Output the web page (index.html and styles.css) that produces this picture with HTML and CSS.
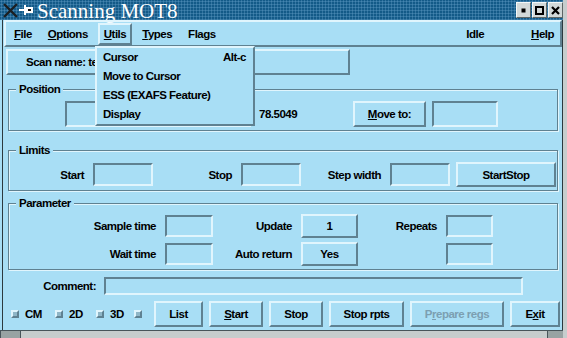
FILE: index.html
```html
<!DOCTYPE html>
<html>
<head>
<meta charset="utf-8">
<title>Scanning MOT8</title>
<link rel="stylesheet" href="styles.css">
</head>
<body>
<div class="win">
    <div class="titlebar">
        <svg class="wm-icon" width="34" height="20" viewBox="0 0 34 20">
            <path d="M4 4 L17 17 M17 4 L4 17" stroke="#1b1f22" stroke-width="2.4" fill="none"/>
            <rect x="19" y="9" width="6" height="2" fill="#fff"/>
            <rect x="24" y="5" width="2" height="10" fill="#fff"/>
            <rect x="26" y="7" width="7" height="6" fill="#fff"/>
            <rect x="28" y="9" width="3" height="2" fill="#111"/>
        </svg>
        <span class="title">Scanning MOT8</span>
        <div class="wm-buttons">
            <div class="wm-btn">
                <svg width="9" height="9" viewBox="0 0 9 9"><rect x="2.5" y="2.5" width="4" height="4" fill="#000"/></svg>
            </div>
            <div class="wm-btn">
                <svg width="9" height="9" viewBox="0 0 9 9"><rect x="1" y="1" width="7" height="7" fill="none" stroke="#000" stroke-width="2"/></svg>
            </div>
            <div class="wm-btn">
                <svg width="9" height="9" viewBox="0 0 9 9"><path d="M1 1 L8 8 M8 1 L1 8" stroke="#000" stroke-width="2.2"/></svg>
            </div>
        </div>
    </div>

    <div class="main">
        <div class="menubar">
            <span class="mb"><u>F</u>ile</span>
            <span class="mb"><u>O</u>ptions</span>
            <span class="mb active"><u>U</u>tils</span>
            <span class="mb"><u>T</u>ypes</span>
            <span class="mb">Flags</span>
            <span class="mb status">Idle</span>
            <span class="mb help"><u>H</u>elp</span>
        </div>

        <div class="scanname"><span class="scan-text">Scan name: test</span></div>

        <fieldset class="group">
            <legend>Position</legend>
            <div class="row pos-row">
                <span class="entry pos-cur"></span>
                <span class="value">78.5049</span>
                <span class="btn move-btn"><u>M</u>ove to:</span>
                <span class="entry move-entry"></span>
            </div>
        </fieldset>

        <fieldset class="group limits">
            <legend>Limits</legend>
            <div class="row lim-row">
                <span class="lbl l-start">Start</span>
                <span class="entry lim-entry"></span>
                <span class="lbl l-stop">Stop</span>
                <span class="entry lim-entry"></span>
                <span class="lbl l-step">Step width</span>
                <span class="entry lim-entry"></span>
                <span class="btn startstop">StartStop</span>
            </div>
        </fieldset>

        <fieldset class="group params">
            <legend>Parameter</legend>
            <div class="param-grid">
                <span class="lbl">Sample time</span>
                <span class="entry"></span>
                <span class="lbl">Update</span>
                <span class="btn">1</span>
                <span class="lbl">Repeats</span>
                <span class="entry"></span>

                <span class="lbl">Wait time</span>
                <span class="entry"></span>
                <span class="lbl">Auto return</span>
                <span class="btn">Yes</span>
                <span class="lbl"></span>
                <span class="entry"></span>
            </div>
        </fieldset>

        <div class="comment-row">
            <span class="lbl">Comment:</span>
            <span class="entry comment-entry"></span>
        </div>

        <div class="button-row">
            <span class="check c1"><i class="box"></i>CM</span>
            <span class="check c2"><i class="box"></i>2D</span>
            <span class="check c3"><i class="box"></i>3D</span>
            <span class="check c4"><i class="box"></i></span>
            <span class="btn b-list">List</span>
            <span class="btn b-start"><u>S</u>tart</span>
            <span class="btn b-stop">Stop</span>
            <span class="btn b-rpts">Stop rpts</span>
            <span class="btn b-prep disabled">P<u>r</u>epare regs</span>
            <span class="btn b-exit">E<u>x</u>it</span>
        </div>
    </div>

    <div class="bottom-frame">
        <span class="corner"></span>
        <span class="corner"></span>
    </div>

    <div class="dropdown">
        <div class="item"><span>Cursor</span><span>Alt-c</span></div>
        <div class="item">Move to Cursor</div>
        <div class="item">ESS (EXAFS Feature)</div>
        <div class="item">Display</div>
    </div>
</div>
</body>
</html>
```

FILE: styles.css
```css
* {
    box-sizing: border-box;
}
body {
    margin: 0;
    width: 567px;
    height: 338px;
    overflow: hidden;
    background: #a8def5;
    font-family: "Liberation Sans", Arial, sans-serif;
    font-weight: bold;
    font-size: 11.5px;
    letter-spacing: -0.5px;
    color: #000;
}
u {
    text-decoration-thickness: 1px;
}

/* window frame */
.win {
    position: relative;
    width: 567px;
    height: 338px;
    border-right: 4px solid #c6cdcd;
    display: flex;
    flex-direction: column;
    background: #a8def5;
}
.titlebar {
    height: 20px;
    flex: none;
    display: flex;
    align-items: center;
    background-color: #135a88;
    background-image: radial-gradient(circle, #4585b0 0.8px, transparent 1.3px);
    background-size: 3px 3px;
}
.wm-icon {
    flex: none;
    display: block;
}
.title {
    font-family: "Liberation Serif", "Times New Roman", serif;
    font-weight: normal;
    font-size: 21px;
    letter-spacing: 0;
    line-height: 20px;
    padding-top: 1px;
    color: #fff;
    margin-left: 3px;
}
.wm-buttons {
    margin-left: auto;
    display: flex;
    gap: 1px;
}
.wm-btn {
    width: 15px;
    height: 16px;
    background: #d2d9d9;
    border: 1px solid;
    border-color: #f4f8f8 #5d6666 #5d6666 #f4f8f8;
    display: flex;
    align-items: center;
    justify-content: center;
}

.main {
    flex: 1;
    margin-left: 2px;
    border-left: 1px solid #2c393e;
    border-right: 1px solid #2c393e;
    display: flex;
    flex-direction: column;
}

/* menubar */
.menubar {
    height: 27px;
    margin-left: 1px;
    border: 2px solid;
    border-color: #e0f5fd #5f8191 #5f8191 #e0f5fd;
    display: flex;
    align-items: center;
    gap: 4px;
    padding-left: 2px;
}
.mb {
    height: 22px;
    line-height: 18px;
    padding: 0 4px;
    border: 2px solid transparent;
}
.mb.active {
    border-color: #e0f5fd #5f8191 #5f8191 #e0f5fd;
}
.mb.status {
    margin-left: auto;
}
.mb.help {
    margin-left: 31px;
}

.dropdown {
    position: absolute;
    left: 95px;
    top: 46px;
    width: 160px;
    height: 80px;
    padding: 0 7px 0 6px;
    background: #a8def5;
    border: 2px solid;
    border-color: #e0f5fd #5f8191 #5f8191 #e0f5fd;
}
.dropdown .item {
    height: 19px;
    line-height: 19px;
    display: flex;
    justify-content: space-between;
}

/* scan name */
.scanname {
    align-self: flex-start;
    width: 344px;
    height: 26px;
    margin: 2px 0 0 3px;
    padding-left: 18px;
    line-height: 22px;
    border: 2px solid;
    border-color: #e0f5fd #5f8191 #5f8191 #e0f5fd;
}
.scan-text {
    display: block;
    width: 69px;
    white-space: nowrap;
    overflow: hidden;
}

/* groups */
.group {
    margin: 7px 4px 0 5px;
    padding: 5px 0 3px 0;
    border: 1px solid #5f8191;
    box-shadow: inset 1px 1px 0 #e0f5fd, 1px 1px 0 #e0f5fd;
    min-width: 0;
}
.group legend {
    margin-left: 7px;
    padding: 0 3px;
    line-height: 14px;
    background: #a8def5;
}
.group.limits {
    margin-top: 12px;
}
.group.params {
    margin-top: 5px;
    padding-top: 4px;
}

.row {
    display: flex;
    align-items: center;
}

.entry {
    display: block;
    border: 2px solid;
    border-color: #5f8191 #e0f5fd #e0f5fd #5f8191;
    height: 22px;
}
.btn {
    display: flex;
    align-items: center;
    justify-content: center;
    border: 2px solid;
    border-color: #e0f5fd #5f8191 #5f8191 #e0f5fd;
    height: 24px;
    white-space: nowrap;
}
.lbl {
    text-align: right;
    white-space: nowrap;
}

.pos-row {
    height: 26px;
}
.pos-cur {
    margin-left: 56px;
    width: 186px;
    height: 26px;
}
.value {
    margin-left: 8px;
    width: 94px;
}
.move-btn {
    width: 73px;
    height: 26px;
}
.move-entry {
    margin-left: 6px;
    width: 66px;
    height: 26px;
}

.lim-row {
    height: 25px;
}
.lim-entry {
    margin-left: 9px;
    width: 60px;
    height: 23px;
}
.l-start {
    width: 75px;
}
.l-stop {
    width: 79px;
}
.l-step {
    width: 80px;
}
.startstop {
    margin-left: 6px;
    width: 100px;
    height: 25px;
}

.param-grid {
    display: grid;
    grid-template-columns: 147px 48px 70px 57px 70px 47px;
    grid-auto-rows: 24px;
    column-gap: 9px;
    row-gap: 4px;
    align-items: center;
}
.param-grid .entry {
    height: 22px;
}
.param-grid .btn {
    height: 24px;
}

/* comment line */
.comment-row {
    margin-top: 7px;
    height: 18px;
    display: flex;
    align-items: center;
}
.comment-row .lbl {
    width: 93px;
}
.comment-entry {
    margin-left: 8px;
    width: 419px;
    height: 18px;
}

/* bottom buttons */
.button-row {
    margin-top: 6px;
    height: 26px;
    display: flex;
    align-items: center;
    gap: 6px;
    padding-left: 8px;
}
.check {
    display: flex;
    align-items: center;
    gap: 6px;
}
.check.c1 {
    width: 38px;
}
.check.c2 {
    width: 35px;
}
.check.c3 {
    width: 32px;
}
.check.c4 {
    width: 8px;
    margin-right: 6px;
}
.box {
    display: block;
    width: 8px;
    height: 8px;
    flex: none;
    background: #8fb6c7;
    border: 2px solid;
    border-color: #e0f5fd #5f8191 #5f8191 #e0f5fd;
}
.button-row .btn {
    height: 26px;
}
.b-list {
    width: 49px;
}
.b-start {
    width: 54px;
}
.b-stop {
    width: 54px;
}
.b-rpts {
    width: 75px;
}
.b-prep {
    width: 94px;
}
.b-exit {
    width: 50px;
}
.disabled {
    color: #7c9fb1;
}

.bottom-frame {
    height: 8px;
    flex: none;
    display: flex;
    justify-content: space-between;
    background: #c6cdcd;
    border-top: 1px solid #48555a;
    border-left: 1px solid #48555a;
}
.corner {
    width: 20px;
    background: #98a3a3;
    border-right: 1px solid #48555a;
}
.corner + .corner {
    border-right: 0;
    border-left: 1px solid #48555a;
    width: 16px;
}
```
